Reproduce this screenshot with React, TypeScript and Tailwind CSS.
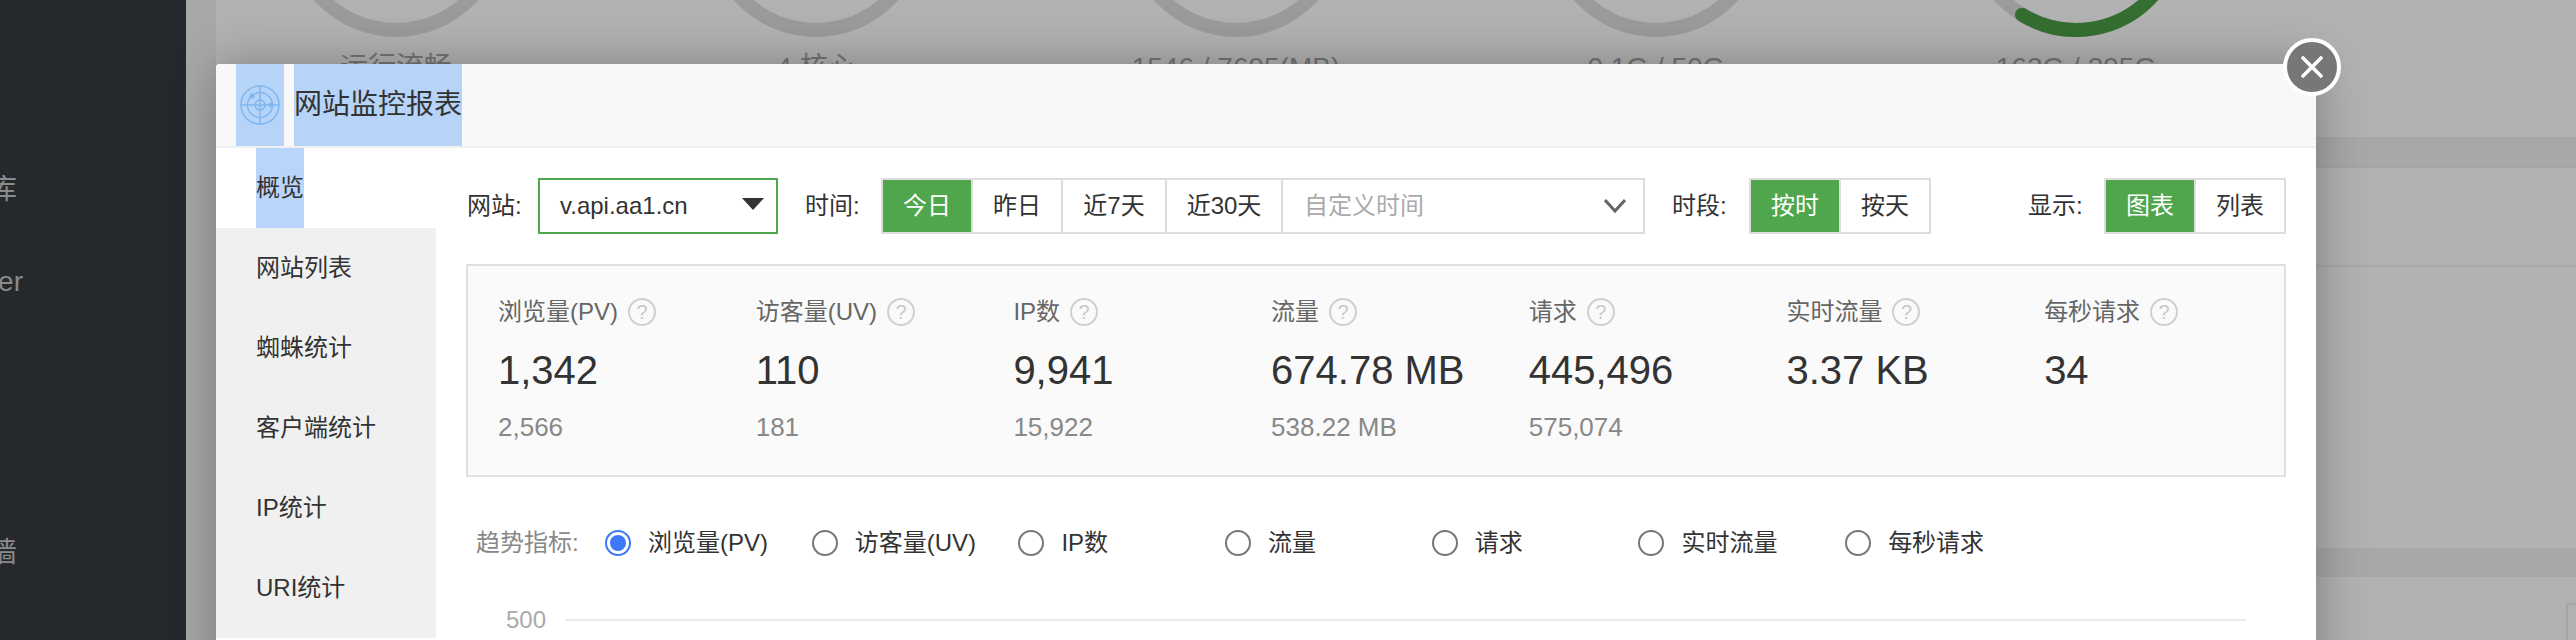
import React from "react";

const tabs = ["概览", "网站列表", "蜘蛛统计", "客户端统计", "IP统计", "URI统计"];
const rings = [
  { label: "运行流畅", green: false },
  { label: "4 核心", green: false },
  { label: "1546 / 7695(MB)", green: false },
  { label: "0.1G / 50G", green: false },
  { label: "163G / 295G", green: true },
];
const stats = [
  { label: "浏览量(PV)", value: "1,342", prev: "2,566" },
  { label: "访客量(UV)", value: "110", prev: "181" },
  { label: "IP数", value: "9,941", prev: "15,922" },
  { label: "流量", value: "674.78 MB", prev: "538.22 MB" },
  { label: "请求", value: "445,496", prev: "575,074" },
  { label: "实时流量", value: "3.37 KB", prev: "" },
  { label: "每秒请求", value: "34", prev: "" },
];
const radios = ["浏览量(PV)", "访客量(UV)", "IP数", "流量", "请求", "实时流量", "每秒请求"];

function Ring({ green }: { green: boolean }) {
  return (
    <svg width="240" height="40" viewBox="0 0 240 40" className="block">
      <circle cx="120" cy="-73" r="103" fill="none" stroke="#9b9b9b" strokeWidth="14" />
      {green && (
        <path
          d="M 66 14.7 A 103 103 0 0 0 199 -7"
          fill="none"
          stroke="#346f31"
          strokeWidth="14"
          strokeLinecap="round"
        />
      )}
    </svg>
  );
}

function Radar() {
  return (
    <svg width="40" height="40" viewBox="0 0 40 40" fill="none" stroke="#7db6f0" strokeWidth="1.4">
      <circle cx="20" cy="20" r="19" />
      <circle cx="20" cy="20" r="12.5" />
      <circle cx="20" cy="20" r="5" />
      <path d="M20 1V39M1 20H39" />
      <circle cx="12" cy="11" r="2.5" fill="#7db6f0" stroke="none" />
      <circle cx="31" cy="20" r="2.5" fill="#7db6f0" stroke="none" />
    </svg>
  );
}

function Help() {
  return (
    <span className="ml-[10px] flex h-7 w-7 items-center justify-center rounded-full border-2 border-[#d0d0d0] text-[20px] leading-none text-[#c8c8c8]">
      ?
    </span>
  );
}

function Seg({ label, w, active, border = true }: { label: string; w: string; active?: boolean; border?: boolean }) {
  return (
    <div
      className={`flex h-full items-center justify-center ${w} ${border ? "border-r-2 border-[#ddd]" : ""} ${
        active ? "bg-[#4fa64d] text-white" : "text-[#333]"
      }`}
    >
      {label}
    </div>
  );
}

export default function App() {
  return (
    <div className="flex h-[640px] w-[2576px] overflow-hidden bg-[#a8a8a8] text-[24px] [font-family:'Liberation_Sans','Noto_Sans_CJK_SC',sans-serif]">
      <aside className="flex w-[186px] shrink-0 flex-col bg-[#25282d] text-[28px] leading-[40px] text-[#8a8b8d]">
        <div className="mt-[170px] flex h-[40px] w-[17px] justify-end overflow-hidden whitespace-nowrap">数据库</div>
        <div className="mt-[52px] flex h-[40px] w-[23px] justify-end overflow-hidden whitespace-nowrap">Docker</div>
        <div className="mt-[231px] flex h-[40px] w-[17px] justify-end overflow-hidden whitespace-nowrap">防火墙</div>
      </aside>

      <main className="relative flex min-w-0 flex-1 flex-col pl-[30px]">
        <section className="flex h-[137px] shrink-0 overflow-hidden bg-[#b2b2b2]">
          <div className="-ml-[30px] flex">
            {rings.map((r) => (
              <div key={r.label} className="flex w-[420px] shrink-0 flex-col items-center">
                <Ring green={r.green} />
                <div className="mt-[8px] text-[28px] leading-[40px] text-[#757575]">{r.label}</div>
              </div>
            ))}
          </div>
        </section>
        <div className="h-[31px] shrink-0 border-y-2 border-[#a5a5a5] bg-[#a8a8a8]" />
        <section className="h-[380px] shrink-0 bg-[#b2b2b2]">
          <div className="h-[99px] border-b-2 border-[#a8a8a8]" />
        </section>
        <div className="h-[29px] shrink-0 bg-[#a8a8a8]" />
        <section className="flex flex-1 justify-end bg-[#b2b2b2] pt-[26px]">
          <div className="h-full w-[10px] border-l-2 border-t-2 border-[#a5a5a5]" />
        </section>

        {/* modal layer */}
        <div className="absolute left-[30px] top-[64px] h-[700px] w-[2100px] rounded-tl-[4px] bg-white text-[#333] shadow-[1px_1px_50px_rgba(0,0,0,0.3)]">
          <button className="absolute -right-[25px] -top-[26px] z-10 flex h-[58px] w-[58px] items-center justify-center rounded-full border-4 border-white bg-[#777]">
            <svg width="24" height="22" viewBox="0 0 24 22" stroke="#fff" strokeWidth="3.6" strokeLinecap="round">
              <path d="M3 2L21 20M21 2L3 20" />
            </svg>
          </button>

          <header className="flex h-[84px] items-stretch rounded-tl-[4px] border-b-2 border-[#f0f0f0] bg-[#f8f8f8] pl-[20px]">
            <span className="flex w-[48px] items-center justify-center bg-[#b6d3f8]">
              <Radar />
            </span>
            <span className="ml-[10px] flex w-[168px] items-center bg-[#b6d3f8] text-[28px] leading-none">
              网站监控报表
            </span>
          </header>

          <div className="flex">
            <nav className="w-[220px] shrink-0 bg-[#f0f0f0]">
              {tabs.map((t, i) => (
                <div key={t} className={`flex h-[80px] pl-[40px] ${i === 0 ? "bg-white" : ""}`}>
                  <span className={`flex h-full items-center ${i === 0 ? "bg-[#bad5fb]" : ""}`}>{t}</span>
                </div>
              ))}
            </nav>

            <div className="min-w-0 flex-1 px-[30px] pt-[30px]">
              <div className="flex h-[56px] items-center">
                <span className="w-[72px] pl-[1px]">网站:</span>
                <div className="flex h-full w-[240px] items-center justify-between border-2 border-[#4fa64d] pl-[20px] pr-[12px]">
                  <span>v.api.aa1.cn</span>
                  <svg width="22" height="12" viewBox="0 0 22 12" className="-mt-[4px]">
                    <path d="M0 0H22L11 12Z" fill="#333" />
                  </svg>
                </div>
                <span className="ml-[27px] w-[76px]">时间:</span>
                <div className="flex h-full w-[764px] border-2 border-[#ddd]">
                  <Seg label="今日" w="w-[90px]" active />
                  <Seg label="昨日" w="w-[90px]" />
                  <Seg label="近7天" w="w-[104px]" />
                  <Seg label="近30天" w="w-[116px]" />
                  <div className="flex flex-1 items-center justify-between pl-[21px] pr-[17px] text-[#aaa]">
                    <span>自定义时间</span>
                    <svg width="22" height="14" viewBox="0 0 22 14" fill="none" stroke="#666" strokeWidth="3">
                      <path d="M1 1L11 12L21 1" />
                    </svg>
                  </div>
                </div>
                <span className="ml-[27px] w-[77px]">时段:</span>
                <div className="flex h-full w-[182px] border-2 border-[#ddd]">
                  <Seg label="按时" w="w-[90px]" active />
                  <Seg label="按天" w="w-[88px]" border={false} />
                </div>
                <span className="ml-auto w-[76px]">显示:</span>
                <div className="flex h-full w-[182px] border-2 border-[#ddd]">
                  <Seg label="图表" w="w-[90px]" active />
                  <Seg label="列表" w="w-[88px]" border={false} />
                </div>
              </div>

              <div className="mt-[30px] flex h-[213px] border-2 border-[#e0e0e0] bg-[#fafafa] pl-[30px] pt-[28px]">
                {stats.map((s) => (
                  <div key={s.label} className="w-[257.7px] shrink-0">
                    <div className="flex h-[36px] items-center text-[#666]">
                      {s.label}
                      <Help />
                    </div>
                    <div className="mt-[12px] text-[40px] leading-[56px] text-[#333]">{s.value}</div>
                    <div className="mt-[11px] text-[26px] leading-[36px] text-[#888]">{s.prev}</div>
                  </div>
                ))}
              </div>

              <div className="mt-[46px] flex h-[40px] items-center pl-[10px]">
                <span className="w-[129px] text-[#888]">趋势指标:</span>
                {radios.map((r, i) => (
                  <div key={r} className="flex w-[206.7px] shrink-0 items-center">
                    <span
                      className={`flex h-[26px] w-[26px] shrink-0 items-center justify-center rounded-full border-2 ${
                        i === 0 ? "border-[#3b78f6]" : "border-[#777]"
                      }`}
                    >
                      {i === 0 && <span className="h-[16px] w-[16px] rounded-full bg-[#3b78f6]" />}
                    </span>
                    <span className="ml-[17px]">{r}</span>
                  </div>
                ))}
              </div>

              <div className="mt-[39px] flex h-[36px] items-center pl-[40px] text-[#aaa]">
                <span className="w-[42px]">500</span>
                <div className="ml-[17px] h-[2px] w-[1681px] bg-[#e6ebf0]" />
              </div>
            </div>
          </div>
        </div>
      </main>
    </div>
  );
}
